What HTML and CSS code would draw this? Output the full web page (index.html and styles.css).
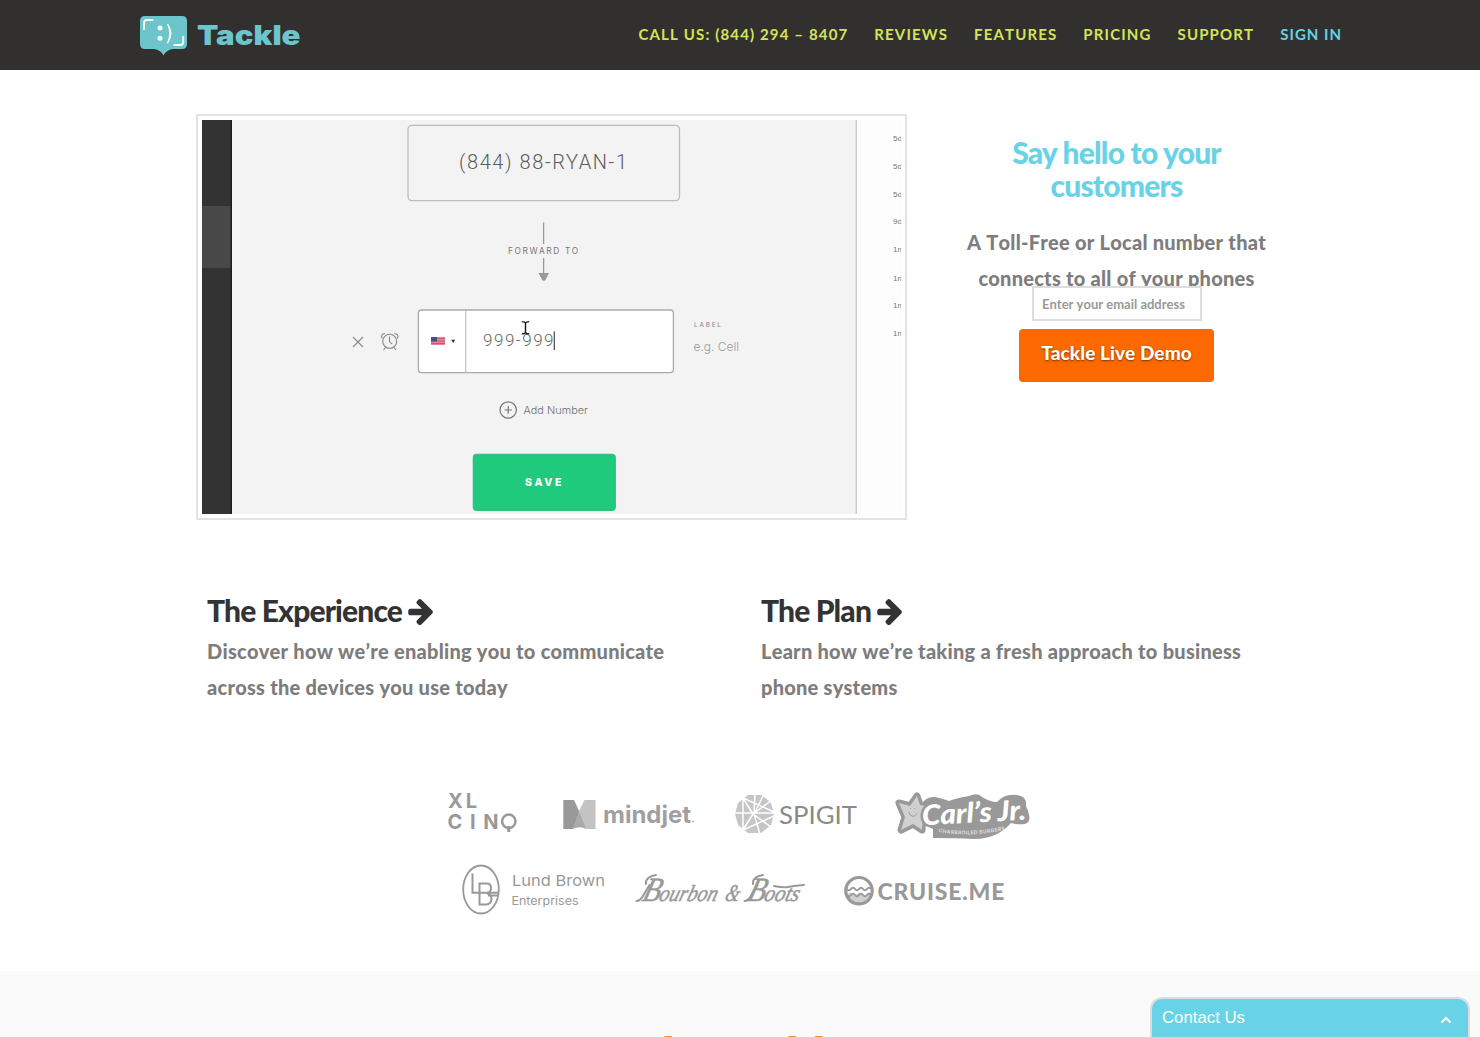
FILE: index.html
```html
<!DOCTYPE html>
<html lang="en">
<head>
<meta charset="utf-8">
<title>Tackle</title>
<link rel="stylesheet" href="styles.css">
</head>
<body>
<header class="site-header">
  <a class="brand" aria-label="Tackle">
    <svg width="162" height="42" viewBox="140 15 162 42">
      <path fill="#6dc5cc" d="M145 16h37q5 0 5 5v23q0 5-5 5h-9q-7 1-9.500 6.500q-2.500-5.500-9.500-6.500h-9q-5 0-5-5v-23q0-5 5-5z"/>
      <path d="M144 29v-6q0-3 3-3h5.500M183.200 37v5q0 3-3 3h-6" fill="none" stroke="#fff" stroke-width="1.900" stroke-linecap="round"/>
      <path d="M167.500 24q7 9 0 19.300q4.300-10 0-19.300z" fill="#fff" stroke="#fff" stroke-width="1"/>
      <circle cx="160" cy="28" r="2.500" fill="#fff"/><circle cx="160" cy="38.300" r="2.500" fill="#fff"/>
      <text class="brand-word" x="197" y="45" textLength="103.500" lengthAdjust="spacingAndGlyphs">Tackle</text>
    </svg>
  </a>
  <nav class="main-nav">
    <a>Call us: (844) 294 – 8407</a>
    <a>Reviews</a>
    <a>Features</a>
    <a>Pricing</a>
    <a>Support</a>
    <a class="sign-in">Sign in</a>
  </nav>
</header>

<main>
<section class="hero">
  <div class="video">
    <svg class="poster" viewBox="202 120 699 394" width="699" height="394">
      <rect x="202" y="120" width="699" height="394" fill="#f3f3f3"/>
      <rect x="202" y="120" width="30" height="394" fill="#333"/>
      <rect x="202" y="206" width="29" height="62" fill="#484848"/>
      <rect x="230.500" y="120" width="1.500" height="394" fill="#1d1d1d"/>
      <rect x="857" y="120" width="44" height="394" fill="#fdfdfd"/>
      <path d="M856.300 120v394" stroke="#c8c8c8" stroke-width="1.300"/>
      <g class="times">
        <text x="893" y="140.500">5d</text><text x="893" y="169">5d</text><text x="893" y="197">5d</text><text x="893" y="224.300">9d</text>
        <text x="893" y="252">1m</text><text x="893" y="280.500">1m</text><text x="893" y="308">1m</text><text x="893" y="335.500">1m</text>
      </g>
      <rect x="408" y="125.400" width="271.500" height="75.200" rx="4" fill="none" stroke="#bcbcbc" stroke-width="1.300"/>
      <text class="thin" x="459" y="169.300" font-size="20" textLength="168" fill="#5c5c5c">(844) 88-RYAN-1</text>
      <path d="M543.600 222.500v21.500M543.600 258v16" stroke="#999" stroke-width="1.300"/>
      <path d="M538.500 273h10.500l-3.700 7.200q-1.500 1.200-3 0z" fill="#999"/>
      <text class="round" x="508" y="254" font-size="8.300" textLength="70" fill="#777">FORWARD TO</text>
      <path d="M353 337l10 10M363 337l-10 10" stroke="#8a8a8a" stroke-width="1.100"/>
      <g fill="none" stroke="#858585" stroke-width="1.100">
        <circle cx="389.700" cy="341.300" r="7"/>
        <path d="M389.500 336.500v5.300l2.800 2.300M385.500 347.500l-2 2.500M394 347.500l2 2.500M382 338.500q-1.700-4.500 3-5M397.500 338.500q1.700-4.500-3-5"/>
      </g>
      <rect x="418.400" y="310" width="255" height="62.600" rx="3" fill="#fff" stroke="#aaa" stroke-width="1.300"/>
      <path d="M465.800 310v62.600" stroke="#b5b5b5"/>
      <rect x="431" y="337" width="14" height="8" fill="#e28797"/>
      <path d="M431 338.500h14M431 341h14M431 343.500h14" stroke="#cb5870" stroke-width="1"/>
      <rect x="431" y="337" width="6" height="4.500" fill="#4b4c88"/>
      <path d="M451.200 339.700h4l-2 3.300z" fill="#333"/>
      <text class="thin" x="483" y="346.300" font-size="17" textLength="70.500" fill="#666">999-999</text>
      <path d="M554.300 331.500v18.500" stroke="#444" stroke-width="1.200"/>
      <path d="M521.800 321.600q3 0 3.700 1.200q.7-1.200 3.700-1.200M521.800 333.900q3 0 3.700-1.200q.7 1.200 3.700 1.200M525.500 322.500v11" fill="none" stroke="#111" stroke-width="1.400"/>
      <text class="round" x="694" y="327.400" font-size="6.500" textLength="27" fill="#888">LABEL</text>
      <text class="wide" x="693.500" y="350.500" font-size="12" textLength="45.500" fill="#999">e.g. Cell</text>
      <circle cx="508.200" cy="410" r="8.200" fill="none" stroke="#777" stroke-width="1.200"/>
      <path d="M504.500 410h7.400M508.200 406.300v7.400" stroke="#777" stroke-width="1.200"/>
      <text class="wide" x="523.500" y="414.200" font-size="10.800" textLength="64.500" fill="#6c6c6c">Add Number</text>
      <rect x="473.200" y="454.200" width="142.200" height="56.300" rx="3" fill="#20ca7c" stroke="#18b96e" stroke-width=".8"/>
      <text class="round" x="525" y="486.200" font-size="10.600" textLength="36.500" fill="#fff" font-weight="800">SAVE</text>
    </svg>
  </div>
  <div class="signup">
    <h2>Say hello to your customers</h2>
    <p>A Toll-Free or Local number that connects to all of your phones</p>
    <input type="email" placeholder="Enter your email address">
    <button>Tackle Live Demo</button>
  </div>
</section>

<section class="features">
  <article>
    <h3>The Experience <svg class="arrow" viewBox="64 0 1600 1792"><path d="M1664 960q0 54-37 91l-651 651q-39 37-91 37-51 0-90-37l-75-75q-38-38-38-91t38-91l293-293h-704q-52 0-84.500-37.500t-32.500-90.500v-128q0-53 32.500-90.500t84.500-37.500h704l-293-294q-38-36-38-90t38-90l75-75q38-38 90-38 53 0 91 38l651 651q37 35 37 90z"/></svg></h3>
    <p>Discover how we’re enabling you to communicate across the devices you use today</p>
  </article>
  <article>
    <h3>The Plan <svg class="arrow" viewBox="64 0 1600 1792"><path d="M1664 960q0 54-37 91l-651 651q-39 37-91 37-51 0-90-37l-75-75q-38-38-38-91t38-91l293-293h-704q-52 0-84.500-37.500t-32.500-90.500v-128q0-53 32.500-90.500t84.500-37.500h704l-293-294q-38-36-38-90t38-90l75-75q38-38 90-38 53 0 91 38l651 651q37 35 37 90z"/></svg></h3>
    <p>Learn how we’re taking a fresh approach to business phone systems</p>
  </article>
</section>

<section class="clients">
  <div class="client-row">
    <svg width="100" height="70" viewBox="440 780 100 70">
      <g class="round" font-weight="700" font-size="20" fill="#999">
        <text x="448" y="808" textLength="29">XL</text>
        <text x="447.500" y="828.800" textLength="51">CIN</text>
      </g>
      <circle cx="508.800" cy="821.300" r="6.700" fill="none" stroke="#999" stroke-width="2.500"/><path d="M508.800 826v6" stroke="#999" stroke-width="3"/>
    </svg>
    <svg width="180" height="70" viewBox="540 780 180 70">
      <path d="M563.300 800h10.700l5.500 12l-6.500 17h-9.700z" fill="#999"/>
      <path d="M584.500 800h11v29h-9l-8-17z" fill="#c3c3c3"/>
      <path d="M574 800l12.500 29q-7-3.500-14 0l6.500-17z" fill="#aaa"/>
      <text class="round" x="603" y="823" font-size="24" font-weight="700" textLength="88" lengthAdjust="spacingAndGlyphs" fill="#a0a0a0">mindjet</text>
      <circle cx="693" cy="821.500" r=".9" fill="#aaa"/>
    </svg>
    <svg width="160" height="70" viewBox="720 780 160 70">
      <path d="M748 795h14l9 8 3 11-3 11-10 8h-13l-10-8-3-11 3-11z" fill="#c6c6c6"/>
      <path d="M743 795v38M734 813h40M753 814l-12-19M753 814l-12 19M741 797l33 15M741 831l33-15M753 814l19-14M753 814l18 13M755 793l-1 21 6 20M754 814l10-20" stroke="#fff" stroke-width="1.500" fill="none"/>
      <text class="light" x="779" y="823.500" font-size="25.500" textLength="78" lengthAdjust="spacingAndGlyphs" fill="#8a8a8a">SPIGIT</text>
    </svg>
    <svg width="160" height="70" viewBox="880 780 160 70">
      <path d="M921 805q5-9 14-8q9 2 14 4q8-3 20-5q9-4 13 1q8 5 15 5q8-9 20-7q10 1 9 11l2 5q4 11-3 13q-8 1-14-1q-14 16-37 16q-18-1-41-1v-9q-13-5-14-15z" fill="#999"/>
      <path d="M917 796l3 9 10 2-7 8-1 15-9-6-12 6 4-13-6-14 11 3z" fill="#999" stroke="#999" stroke-width="7" stroke-linejoin="round"/>
      <path d="M917 796l3 9 10 2-7 8-1 15-9-6-12 6 4-13-6-14 11 3z" fill="#d0d0d0"/>
      <path d="M908.500 812q4 8 8.500 1.500M910.500 808v1M914.500 808v1" stroke="#999" fill="none"/>
      <text class="burger" transform="rotate(-3 973 815)" x="922" y="822.500" textLength="104" lengthAdjust="spacingAndGlyphs">Carl’s Jr.</text>
      <path id="ribbon" d="M938.500 832q35 6 69-3" fill="none"/>
      <text class="round" font-size="5" font-weight="700" fill="#ddd"><textPath href="#ribbon" textLength="67">CHARBROILED BURGERS</textPath></text>
    </svg>
  </div>
  <div class="client-row">
    <svg width="170" height="70" viewBox="450 855 170 70">
      <ellipse cx="481" cy="889.500" rx="17.800" ry="24" fill="none" stroke="#999" stroke-width="1.800"/>
      <path d="M472.500 873.500v19.300h26.500M479.500 904.500v-21h7.500q4 0 4 4.500t-4 4.800M487 893.500q4.500 .8 4.500 5.500t-5 5.500h-8M488 895.500h10" fill="none" stroke="#999" stroke-width="2"/>
      <g class="round" fill="#999">
        <text x="512" y="885.500" font-size="15" textLength="93" lengthAdjust="spacingAndGlyphs">Lund Brown</text>
        <text x="511.500" y="904.700" font-size="11.500" textLength="67" lengthAdjust="spacingAndGlyphs">Enterprises</text>
      </g>
    </svg>
    <svg width="200" height="70" viewBox="620 855 200 70">
      <g class="script" transform="translate(641 901) skewX(-16)">
        <text x="0" y="0" font-size="34" textLength="18" lengthAdjust="spacingAndGlyphs">B</text>
        <text x="17" y="0" font-size="23" textLength="58" lengthAdjust="spacingAndGlyphs">ourbon</text>
        <text x="83" y="0" font-size="24" textLength="14" lengthAdjust="spacingAndGlyphs">&amp;</text>
        <text x="105" y="0" font-size="34" textLength="18" lengthAdjust="spacingAndGlyphs">B</text>
        <text x="122" y="0" font-size="23" textLength="35" lengthAdjust="spacingAndGlyphs">oots</text>
      </g>
      <path d="M636.500 901q4 0 7-6l6-10M744.500 901q4 0 7-6l6-10M646 884q-1-7 10-9M753 884q-1-7 10-9M774 886q10 2 14 1t16-2" fill="none" stroke="#999" stroke-width="2" stroke-linecap="round"/>
    </svg>
    <svg width="210" height="70" viewBox="820 855 210 70">
      <path d="M848 894q2-3 4 0t5 0 5 0 5 0 4 0q-1 9-12 10-10-1-11-10z" fill="#d0d0d0"/>
      <circle cx="859" cy="890.700" r="13.200" fill="none" stroke="#999" stroke-width="3.200"/>
      <path d="M847 889q2 2.600 4 0t4 0 4 0 4 0 4 0 4 0M847 895q2 2.600 4 0t4 0 4 0 4 0 4 0 4 0" fill="none" stroke="#999" stroke-width="2"/>
      <text x="877.500" y="899.500" class="cruise" textLength="127">CRUISE.ME</text>
    </svg>
  </div>
</section>
</main>

<section class="next-section">
  <svg class="headline-tops" viewBox="660 1036 165 1"><path d="M664.500 1036.500h7.500M788.500 1036.500h7.500M815 1036.500h7.500" stroke="#f98a32"/></svg>
</section>

<aside class="contact">
  <span>Contact Us</span>
  <svg width="12" height="8" viewBox="0 0 12 8"><path d="M1.500 6.500L6 2l4.500 4.500" fill="none" stroke="#fff" stroke-width="2.200"/></svg>
</aside>
</body>
</html>
```
FILE: styles.css
```css
* { box-sizing: border-box; }
body {
  margin: 0;
  height: 1037px;
  overflow: hidden;
  position: relative;
  background: #fff;
  color: #7d7d7d;
  font-family: Lato, sans-serif;
}
h2, h3, p { margin: 0; }
svg { display: block; }

.site-header {
  height: 70px;
  padding: 0 138px 0 140px;
  background: #32302f;
  display: flex;
  justify-content: space-between;
}
.brand { padding-top: 15px; }
.brand-word { font: 900 27.500px Inter, sans-serif; fill: #6dc5cc; }
.main-nav {
  display: flex;
  gap: 26px;
  font-size: 15px;
  font-weight: 700;
  line-height: 69px;
  letter-spacing: 1.140px;
  font-kerning: none;
  text-transform: uppercase;
  color: #d3e45a;
}
.sign-in { color: #66d1e6; letter-spacing: 1px; }

.hero { display: flex; gap: 50px; padding: 44px 0 0 196px; }
.video { padding: 4px; border: 2px solid #e3e3e3; width: 711px; height: 406px; }
.thin { font-family: Roboto, sans-serif; font-weight: 300; }
.light { font-family: Lato, sans-serif; }
.wide { font-family: Inter, sans-serif; font-weight: 300; }
.round { font-family: Inter, sans-serif; }
.times { font: 8px "Liberation Sans", sans-serif; fill: #777; }

.signup { width: 319px; padding-top: 22px; text-align: center; }
.signup h2 {
  color: #68d2e7;
  font-size: 30px;
  font-weight: 900;
  line-height: 33px;
  letter-spacing: -.800px;
}
.signup p, .features p {
  font-size: 20px;
  font-weight: 900;
  line-height: 36px;
  letter-spacing: .240px;
  font-kerning: none;
}
.signup p { margin-top: 22px; }
.signup input {
  display: block;
  position: relative;
  width: 170px;
  height: 35px;
  margin: -10px auto 8px 75px;
  padding: 0 8px;
  border: 2px solid #ddd;
  background: #fff;
  font: 700 13px Lato, sans-serif;
  font-kerning: none;
}
.signup input::placeholder { color: #999; opacity: 1; }
.signup button {
  display: block;
  width: 195px;
  height: 53px;
  margin: 0 auto;
  padding: 0 0 6px;
  border: 0;
  border-radius: 4px;
  background: #fb6900;
  color: #fff;
  font: 900 19px Lato, sans-serif;
  letter-spacing: .100px;
  text-shadow: 0 1px 2px rgba(0, 0, 0, .5);
}

.features { display: flex; gap: 54px; padding: 74px 0 0 207px; }
.features article { width: 500px; }
.features h3 {
  display: flex;
  align-items: center;
  gap: 4px;
  color: #333;
  font-size: 30px;
  font-weight: 900;
  line-height: 33px;
  letter-spacing: -.850px;
}
.features p { margin-top: 6px; }
.arrow { width: 27px; height: 30px; fill: #333; }

.clients { display: flex; flex-direction: column; align-items: center; gap: 5px; padding-top: 75px; }
.client-row { display: flex; }
.burger { font: italic 900 28px Lato, sans-serif; fill: #fff; stroke: #999; stroke-width: 5px; stroke-linejoin: round; paint-order: stroke; }
.script { font-family: "Liberation Serif", serif; font-style: italic; fill: #999; stroke: #999; stroke-width: .5px; }
.cruise { font: 900 23px Lato, sans-serif; fill: #999; }

.next-section { height: 66px; margin-top: 46px; padding: 65px 0 0 660px; background: #fafafa; }
.headline-tops { width: 165px; height: 1px; }

.contact {
  position: absolute;
  right: 10px;
  bottom: 0;
  width: 320px;
  height: 40px;
  padding: 0 16px 1px 10px;
  border: 2px solid #ddd;
  border-bottom: 0;
  border-radius: 12px 12px 0 0;
  background: #68d2e7;
  color: #fff;
  display: flex;
  align-items: center;
  justify-content: space-between;
  font: 16.800px "Liberation Sans", sans-serif;
}
.contact svg { margin-top: 4px; }
```
